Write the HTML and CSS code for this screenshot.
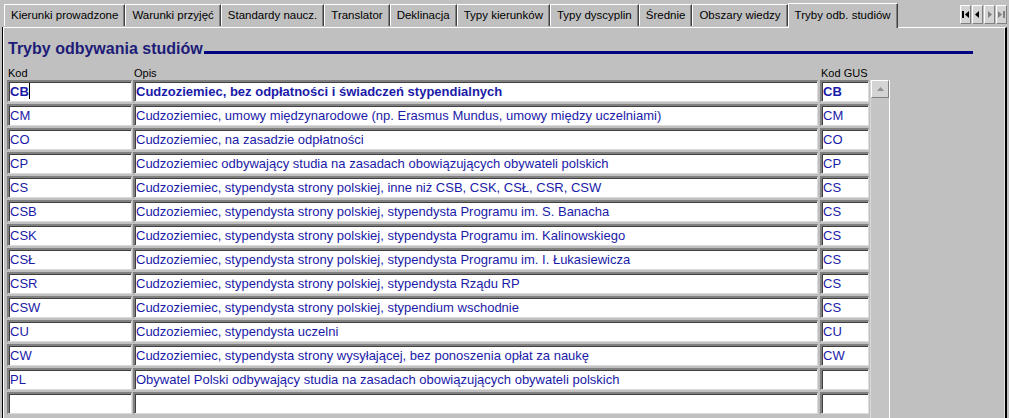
FILE: index.html
```html
<!DOCTYPE html>
<html lang="pl">
<head>
    <meta charset="UTF-8">
    <title>Tryby odbywania studiów</title>
    <link rel="stylesheet" href="styles.css">
</head>
<body>
    <div class="tabstrip">
        <div class="tab">Kierunki prowadzone</div>
        <div class="tab">Warunki przyjęć</div>
        <div class="tab">Standardy naucz.</div>
        <div class="tab">Translator</div>
        <div class="tab">Deklinacja</div>
        <div class="tab">Typy kierunków</div>
        <div class="tab">Typy dyscyplin</div>
        <div class="tab">Średnie</div>
        <div class="tab">Obszary wiedzy</div>
        <div class="tab active">Tryby odb. studiów</div>
        <div class="nav">
            <span class="nav-btn"><svg width="9" height="9" viewBox="0 0 9 9"><rect x="1" y="1" width="2" height="7" fill="#000"/><path d="M8 1 L4 4.5 L8 8 Z" fill="#000"/></svg></span>
            <span class="nav-btn"><svg width="9" height="9" viewBox="0 0 9 9"><path d="M6 1 L2 4.5 L6 8 Z" fill="#000"/></svg></span>
            <span class="nav-btn"><svg width="9" height="9" viewBox="0 0 9 9"><path d="M3 1 L7 4.5 L3 8 Z" fill="#808080"/></svg></span>
            <span class="nav-btn"><svg width="9" height="9" viewBox="0 0 9 9"><path d="M1 1 L5 4.5 L1 8 Z" fill="#808080"/><rect x="6" y="1" width="2" height="7" fill="#808080"/></svg></span>
        </div>
    </div>

    <div class="panel">
        <div class="title-row">
            <h1>Tryby odbywania studiów</h1>
            <div class="title-line"></div>
        </div>

        <div class="labels">
            <span>Kod</span>
            <span>Opis</span>
            <span>Kod GUS</span>
        </div>

        <div class="table">
            <div class="rows" id="rows"></div>
            <div class="scrollbar">
                <div class="scroll-up"><svg width="7" height="4" viewBox="0 0 7 4"><path d="M0 4 L3.5 0 L7 4 Z" fill="#909090"/></svg></div>
            </div>
        </div>
    </div>

    <script>
        const tryby = [
            ['CB', 'Cudzoziemiec, bez odpłatności i świadczeń stypendialnych', 'CB'],
            ['CM', 'Cudzoziemiec, umowy międzynarodowe (np. Erasmus Mundus, umowy między uczelniami)', 'CM'],
            ['CO', 'Cudzoziemiec, na zasadzie odpłatności', 'CO'],
            ['CP', 'Cudzoziemiec odbywający studia na zasadach obowiązujących obywateli polskich', 'CP'],
            ['CS', 'Cudzoziemiec, stypendysta strony polskiej, inne niż CSB, CSK, CSŁ, CSR, CSW', 'CS'],
            ['CSB', 'Cudzoziemiec, stypendysta strony polskiej, stypendysta Programu im. S. Banacha', 'CS'],
            ['CSK', 'Cudzoziemiec, stypendysta strony polskiej, stypendysta Programu im. Kalinowskiego', 'CS'],
            ['CSŁ', 'Cudzoziemiec, stypendysta strony polskiej, stypendysta Programu im. I. Łukasiewicza', 'CS'],
            ['CSR', 'Cudzoziemiec, stypendysta strony polskiej, stypendysta Rządu RP', 'CS'],
            ['CSW', 'Cudzoziemiec, stypendysta strony polskiej, stypendium wschodnie', 'CS'],
            ['CU', 'Cudzoziemiec, stypendysta uczelni', 'CU'],
            ['CW', 'Cudzoziemiec, stypendysta strony wysyłającej, bez ponoszenia opłat za naukę', 'CW'],
            ['PL', 'Obywatel Polski odbywający studia na zasadach obowiązujących obywateli polskich', ''],
            ['', '', '']
        ];

        const rows = document.getElementById('rows');
        tryby.forEach((row, i) => {
            row.forEach((value, col) => {
                const cell = document.createElement('div');
                cell.className = 'field' + (i === 0 ? ' current' : '');
                cell.textContent = value;
                if (i === 0 && col === 0) {
                    const caret = document.createElement('span');
                    caret.className = 'caret';
                    cell.appendChild(caret);
                }
                rows.appendChild(cell);
            });
        });
    </script>
</body>
</html>
```

FILE: styles.css
```css
body {
    margin: 0;
    width: 1009px;
    height: 418px;
    overflow: hidden;
    background: #c0c0c0;
    font-family: "Liberation Sans", Arial, sans-serif;
}

/* tabs */
.tabstrip {
    display: flex;
    align-items: flex-end;
    height: 27px;
    padding-left: 4px;
}

.tab {
    height: 21px;
    line-height: 20px;
    padding: 0 6px;
    font-size: 11.5px;
    color: #000;
    border-top: 1px solid #fff;
    border-left: 1px solid #fff;
    border-right: 1px solid #404040;
    box-shadow: inset -1px 0 0 #808080;
    margin-bottom: 1px;
}

.tab.active {
    height: 24px;
    line-height: 22px;
    margin-bottom: -1px;
    position: relative;
    z-index: 1;
    background: #c0c0c0;
}

.nav {
    display: flex;
    margin-left: auto;
    margin-right: 2px;
    align-self: flex-start;
    margin-top: 5px;
}

.nav-btn {
    width: 9px;
    height: 17px;
    display: flex;
    align-items: center;
    justify-content: center;
    border-top: 1px solid #fff;
    border-left: 1px solid #fff;
    border-right: 1px solid #808080;
    border-bottom: 1px solid #808080;
    background: #d4d4d4;
    margin-left: 1px;
}

/* panel */
.panel {
    height: 392px;
    border-top: 1px solid #fff;
    border-left: 1px solid #fff;
    border-right: 2px solid #000;
    box-shadow: -1px 0 0 #000, inset -1px 0 0 #e0e0e0;
    margin-left: 3px;
    margin-right: 2px;
    padding-left: 3px;
}

.title-row {
    display: flex;
    align-items: flex-end;
    height: 31px;
    margin-right: 32px;
}

.title-row h1 {
    margin: 0 1px 0 1px;
    font-size: 16px;
    font-weight: bold;
    color: #1c1c78;
    line-height: 20px;
}

.title-line {
    flex: 1;
    height: 3px;
    background: #000080;
    margin-bottom: 5px;
}

.labels {
    display: grid;
    grid-template-columns: 126px 687px 50px;
    height: 13px;
    margin-top: 8px;
    font-size: 11px;
    line-height: 13px;
    color: #000;
    padding-left: 1px;
}

.table {
    display: flex;
}

.rows {
    display: grid;
    grid-template-columns: 125px 685px 50px;
    column-gap: 1px;
    row-gap: 2px;
    grid-auto-rows: 22px;
}

.rows .field:nth-child(3n) {
    margin-left: 1px;
}

.field {
    position: relative;
    background: #fff;
    border-top: 2px solid #808080;
    border-left: 2px solid #808080;
    border-bottom: 1px solid #dcdcdc;
    border-right: 1px solid #dcdcdc;
    box-shadow: inset 1px 1px 0 #404040;
    padding-left: 1px;
    font-size: 13px;
    line-height: 19px;
    color: #1a1aa8;
    white-space: nowrap;
    overflow: hidden;
}

.field.current {
    font-weight: bold;
}

.caret {
    display: inline-block;
    width: 1px;
    height: 16px;
    background: #000;
    vertical-align: -3px;
}

.scrollbar {
    width: 18px;
    margin-left: 1px;
    height: 340px;
    background: #c4c4c4;
    border-left: 1px solid #d8d8d8;
    border-right: 1px solid #fff;
}

.scroll-up {
    height: 16px;
    display: flex;
    align-items: center;
    justify-content: center;
    background: #d4d4d4;
    border-top: 1px solid #fff;
    border-left: 1px solid #fff;
    border-right: 1px solid #808080;
    border-bottom: 1px solid #808080;
}
```
